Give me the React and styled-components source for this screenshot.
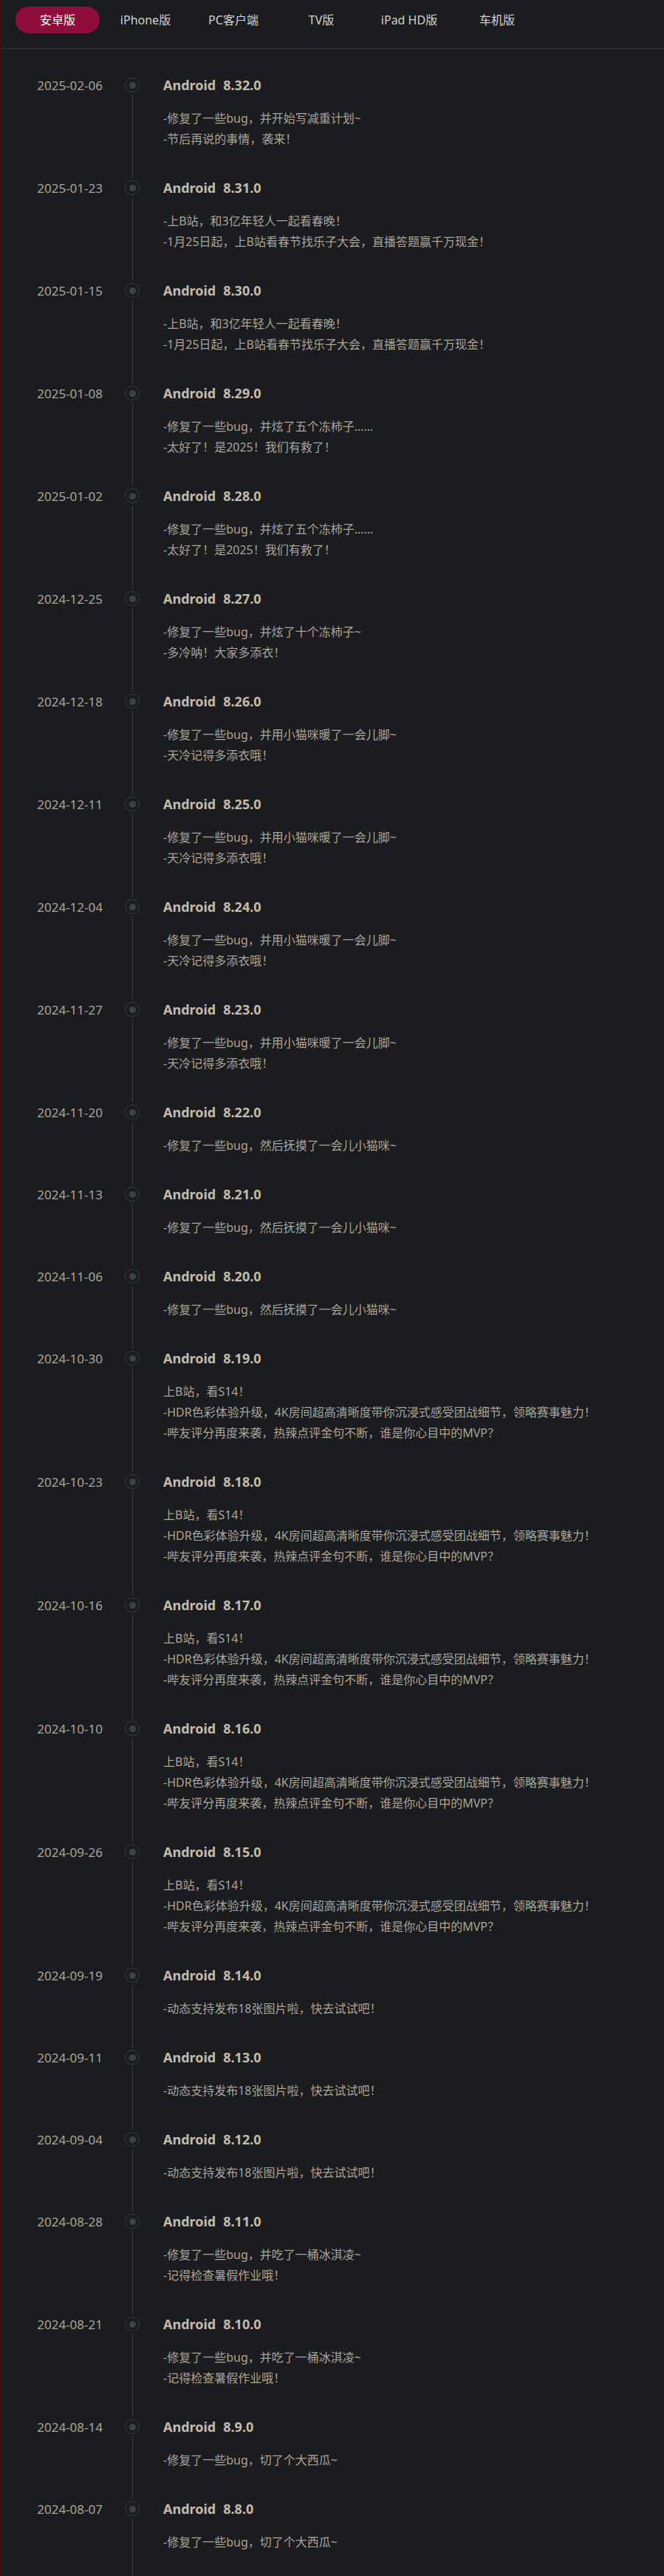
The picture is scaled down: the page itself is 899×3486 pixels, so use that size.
import React from "react";
import styled, { createGlobalStyle } from "styled-components";

const GlobalStyle = createGlobalStyle`
  html, body {
    margin: 0;
    padding: 0;
    background: #1b1c1f;
  }
  body {
    font-family: "Noto Sans", "Noto Sans CJK SC", sans-serif;
  }
`;

const Page = styled.div`
  min-height: 3486px;
  background: #1b1c1f;
  border-left: 2px solid #420909;
  box-sizing: border-box;
`;

const TabBar = styled.div`
  display: flex;
  gap: 5px;
  padding: 9px 0 20px 19px;
  border-bottom: 1px solid #353638;
`;

const Tab = styled.div`
  width: 114px;
  height: 36px;
  line-height: 36px;
  border-radius: 18px;
  text-align: center;
  font-size: 16px;
  color: ${(p) => (p.active ? "#ffffff" : "#d2d2d2")};
  background: ${(p) => (p.active ? "#8e0d3a" : "transparent")};
  font-family: "Noto Sans", "Noto Sans CJK SC", sans-serif;
`;

const Timeline = styled.div`
  padding-top: 34px;
`;

const Entry = styled.div`
  display: flex;
`;

const DateCol = styled.div`
  width: 137px;
  text-align: right;
  font-size: 17px;
  line-height: 32px;
  color: #aba498;
`;

const Axis = styled.div`
  width: 80px;
  display: flex;
  flex-direction: column;
  align-items: center;
`;

const Dot = styled.div`
  width: 18px;
  height: 18px;
  margin-top: 5px;
  border: 1px solid #3a3b3f;
  border-radius: 50%;
  display: flex;
  align-items: center;
  justify-content: center;
  flex-shrink: 0;

  &::after {
    content: "";
    width: 9px;
    height: 9px;
    border-radius: 50%;
    background: #3d4045;
  }
`;

const Line = styled.div`
  flex: 1;
  width: 1px;
  background: #3c3d40;
  margin: 3px 0 -2px;
`;

const Content = styled.div`
  padding-left: 2px;
  padding-bottom: 37px;
`;

const Title = styled.div`
  font-size: 18px;
  font-weight: 700;
  line-height: 30px;
  color: #c3baab;

  span + span {
    margin-left: 10px;
  }
`;

const Body = styled.div`
  margin-top: 16px;
  font-size: 16px;
  line-height: 28px;
  color: #aaa499;
  font-family: "Noto Sans", "Noto Sans CJK SC", sans-serif;
`;

const tabs = ["安卓版", "iPhone版", "PC客户端", "TV版", "iPad HD版", "车机版"];

const bili = ["-上B站，和3亿年轻人一起看春晚！", "-1月25日起，上B站看春节找乐子大会，直播答题赢千万现金！"];
const persimmon = ["-修复了一些bug，并炫了五个冻柿子……", "-太好了！是2025！我们有救了！"];
const kitty = ["-修复了一些bug，并用小猫咪暖了一会儿脚~", "-天冷记得多添衣哦！"];
const pet = ["-修复了一些bug，然后抚摸了一会儿小猫咪~"];
const s14 = [
  "上B站，看S14！",
  "-HDR色彩体验升级，4K房间超高清晰度带你沉浸式感受团战细节，领略赛事魅力！",
  "-哔友评分再度来袭，热辣点评金句不断，谁是你心目中的MVP？",
];
const pics = ["-动态支持发布18张图片啦，快去试试吧！"];
const icecream = ["-修复了一些bug，并吃了一桶冰淇凌~", "-记得检查暑假作业哦！"];
const melon = ["-修复了一些bug，切了个大西瓜~"];

const releases = [
  { date: "2025-02-06", ver: "8.32.0", lines: ["-修复了一些bug，并开始写减重计划~", "-节后再说的事情，袭来！"] },
  { date: "2025-01-23", ver: "8.31.0", lines: bili },
  { date: "2025-01-15", ver: "8.30.0", lines: bili },
  { date: "2025-01-08", ver: "8.29.0", lines: persimmon },
  { date: "2025-01-02", ver: "8.28.0", lines: persimmon },
  { date: "2024-12-25", ver: "8.27.0", lines: ["-修复了一些bug，并炫了十个冻柿子~", "-多冷呐！大家多添衣！"] },
  { date: "2024-12-18", ver: "8.26.0", lines: kitty },
  { date: "2024-12-11", ver: "8.25.0", lines: kitty },
  { date: "2024-12-04", ver: "8.24.0", lines: kitty },
  { date: "2024-11-27", ver: "8.23.0", lines: kitty },
  { date: "2024-11-20", ver: "8.22.0", lines: pet },
  { date: "2024-11-13", ver: "8.21.0", lines: pet },
  { date: "2024-11-06", ver: "8.20.0", lines: pet },
  { date: "2024-10-30", ver: "8.19.0", lines: s14 },
  { date: "2024-10-23", ver: "8.18.0", lines: s14 },
  { date: "2024-10-16", ver: "8.17.0", lines: s14 },
  { date: "2024-10-10", ver: "8.16.0", lines: s14 },
  { date: "2024-09-26", ver: "8.15.0", lines: s14 },
  { date: "2024-09-19", ver: "8.14.0", lines: pics },
  { date: "2024-09-11", ver: "8.13.0", lines: pics },
  { date: "2024-09-04", ver: "8.12.0", lines: pics },
  { date: "2024-08-28", ver: "8.11.0", lines: icecream },
  { date: "2024-08-21", ver: "8.10.0", lines: icecream },
  { date: "2024-08-14", ver: "8.9.0", lines: melon },
  { date: "2024-08-07", ver: "8.8.0", lines: melon },
];

export default function App() {
  return (
    <Page>
      <GlobalStyle />
      <TabBar>
        {tabs.map((t, i) => (
          <Tab key={t} active={i === 0}>
            {t}
          </Tab>
        ))}
      </TabBar>
      <Timeline>
        {releases.map((r) => (
          <Entry key={r.ver}>
            <DateCol>{r.date}</DateCol>
            <Axis>
              <Dot />
              <Line />
            </Axis>
            <Content>
              <Title>
                <span>Android</span>
                <span>{r.ver}</span>
              </Title>
              <Body>
                {r.lines.map((l, i) => (
                  <div key={i}>{l}</div>
                ))}
              </Body>
            </Content>
          </Entry>
        ))}
      </Timeline>
    </Page>
  );
}
